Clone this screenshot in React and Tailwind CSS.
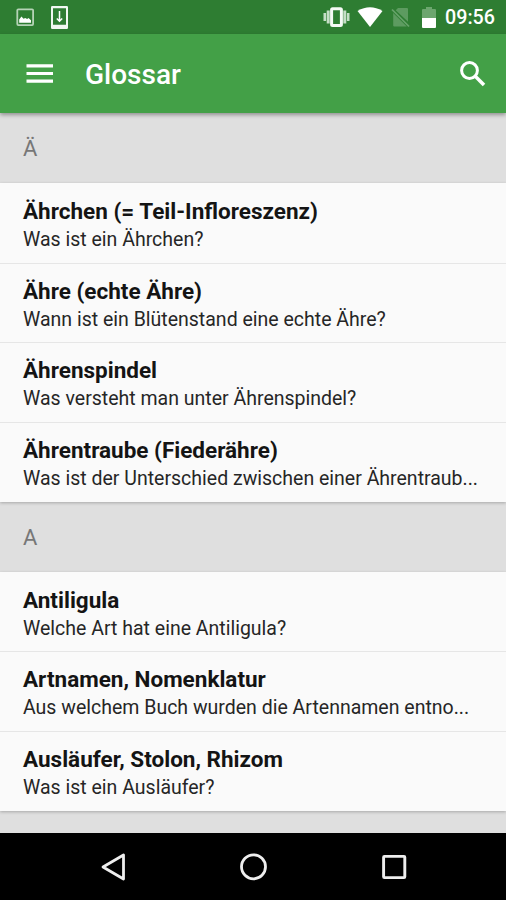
import React from "react";

const sections = [
  {
    letter: "Ä",
    items: [
      { title: "Ährchen (= Teil-Infloreszenz)", text: "Was ist ein Ährchen?" },
      { title: "Ähre (echte Ähre)", text: "Wann ist ein Blütenstand eine echte Ähre?" },
      { title: "Ährenspindel", text: "Was versteht man unter Ährenspindel?" },
      { title: "Ährentraube (Fiederähre)", text: "Was ist der Unterschied zwischen einer Ährentraub..." },
    ],
  },
  {
    letter: "A",
    items: [
      { title: "Antiligula", text: "Welche Art hat eine Antiligula?" },
      { title: "Artnamen, Nomenklatur", text: "Aus welchem Buch wurden die Artennamen entno..." },
      { title: "Ausläufer, Stolon, Rhizom", text: "Was ist ein Ausläufer?" },
    ],
  },
];

function StatusBar() {
  return (
    <div className="flex h-[34px] shrink-0 items-center bg-[#2e7d32] pl-4 pr-[11px] text-white">
      {/* Screenshot saved */}
      <svg className="h-[18px] w-[18px]" viewBox="0 0 18 18" fill="none">
        <rect x="1.3" y="1.3" width="15.8" height="15.8" rx="1" stroke="#b5d3b6" strokeWidth="1.8" />
        <path d="M3.2 14.8V11.4l2.3-2.8 2 2.2 1.8-.8 1.8 1 1.4-1 2.5 2.2v2.6z" fill="#fff" />
      </svg>
      {/* Download to phone */}
      <svg className="ml-[17px] h-[23px] w-[17px]" viewBox="0 0 17 23" fill="none">
        <path d="M1.2 0h14.6q1.2 0 1.2 1.2v20.6q0 1.2-1.2 1.2H1.2Q0 23 0 21.8V1.2Q0 0 1.2 0zM2 2.3v16.4h13V2.3z" fill="#f1f8f1" fillRule="evenodd" />
        <path d="M8.5 5v10M5.8 12.4l2.7 2.8 2.7-2.8" stroke="#fff" strokeWidth="1.5" />
      </svg>
      <div className="ml-auto flex items-center">
        {/* Vibration mode */}
        <svg className="h-5 w-[27px]" viewBox="0 0 27 20" fill="none">
          <rect x="8.6" y="1.8" width="9.8" height="16.6" rx="1" stroke="#f5faf5" strokeWidth="3" />
          <path d="M5.2 3.5v13M21.8 3.5v13" stroke="#c5dec6" strokeWidth="3" />
          <path d="M1.8 6v8M25.2 6v8" stroke="#c5dec6" strokeWidth="2.6" />
        </svg>
        {/* Wi-Fi */}
        <svg className="ml-[7px] h-5 w-[26px]" viewBox="0 0 26 20">
          <path d="M0.5 4Q13-3.5 25.5 4L13 20z" fill="#fff" />
        </svg>
        {/* No SIM card */}
        <svg className="ml-2 h-[21px] w-[19px]" viewBox="0 0 19 21" fill="none">
          <path d="M7 1h9q1 0 1 1v12.8L4.7 3.3zM2.2 6v12.5q0 1 1 1h12.6z" fill="#5d9b60" />
          <path d="M1 2.5l17 17" stroke="#68a36b" strokeWidth="1.7" />
        </svg>
        {/* Battery */}
        <svg className="ml-3 h-[21px] w-[14px]" viewBox="0 0 14 21">
          <path d="M4 0h6v2h3q1 0 1 1v8H0V3q0-1 1-1h3z" fill="#6ca66e" />
          <path d="M0 11h14v9q0 1-1 1H1q-1 0-1-1z" fill="#fff" />
        </svg>
        <span className="ml-[9px] mt-[2px] w-[50px] whitespace-nowrap text-[19.7px] font-medium leading-6">09:56</span>
      </div>
    </div>
  );
}

function AppBar() {
  return (
    <header className="relative z-10 flex h-[79px] shrink-0 items-center bg-[#43a047] pl-[26px] pr-5 text-white shadow-[0_2px_4px_rgba(0,0,0,0.35)]">
      <svg className="h-5 w-[27px]" viewBox="0 0 27 20">
        <path d="M0.5 0.2h26.5v3.2H0.5zM0.5 7.9h26.5v3.2H0.5zM0.5 15.6h26.5v3.2H0.5z" fill="#fff" />
      </svg>
      <h1 className="ml-8 mt-[3px] text-[28px] font-medium leading-8">Glossar</h1>
      <svg className="ml-auto h-[26px] w-[26px]" viewBox="0 0 26 26" fill="none" stroke="#fff">
        <circle cx="9.5" cy="9.5" r="7.9" strokeWidth="3" />
        <path d="M15.3 15.3l8.7 8.7" strokeWidth="3.5" />
      </svg>
    </header>
  );
}

function GlossaryItem({ title, text }) {
  return (
    <li className="h-[79.7px] border-b border-[#e6e6e6] px-[23px] pt-[13px] first:h-[80.5px] first:pt-[14px] last:h-[79px] last:border-b-0">
      <h2 className="whitespace-nowrap text-[22.5px] font-bold leading-7 text-[#141414]">{title}</h2>
      <p className="mt-px whitespace-nowrap text-[19.5px] leading-7 text-[#262626]">{text}</p>
    </li>
  );
}

function NavigationBar() {
  return (
    <nav className="flex h-[67px] shrink-0 items-center justify-between bg-black pl-[100px] pr-[98px]">
      <svg className="h-7 w-7" viewBox="0 0 28 28" fill="none">
        <path d="M3 14L23.5 2v24z" stroke="#eee" strokeWidth="2.8" strokeLinejoin="round" />
      </svg>
      <svg className="h-7 w-7" viewBox="0 0 28 28" fill="none">
        <circle cx="13.5" cy="13.8" r="12" stroke="#eee" strokeWidth="2.8" />
      </svg>
      <svg className="h-7 w-7" viewBox="0 0 28 28" fill="none">
        <rect x="3.6" y="3.4" width="21.2" height="21.2" rx="0.8" stroke="#eee" strokeWidth="2.9" />
      </svg>
    </nav>
  );
}

export default function App() {
  return (
    <div className="flex h-[900px] w-[506px] flex-col overflow-hidden bg-[#dfdfdf] font-['Roboto',sans-serif]">
      <StatusBar />
      <AppBar />
      <main className="min-h-0 flex-1 overflow-hidden">
        {sections.map((section) => (
          <section key={section.letter}>
            <div className="flex h-[70px] items-center px-[23px] pt-px text-[22px] text-[#777]">{section.letter}</div>
            <ul className="bg-[#fafafa] shadow-[0_1px_3px_rgba(0,0,0,0.25)]">
              {section.items.map((item) => (
                <GlossaryItem key={item.title} title={item.title} text={item.text} />
              ))}
            </ul>
          </section>
        ))}
      </main>
      <NavigationBar />
    </div>
  );
}
